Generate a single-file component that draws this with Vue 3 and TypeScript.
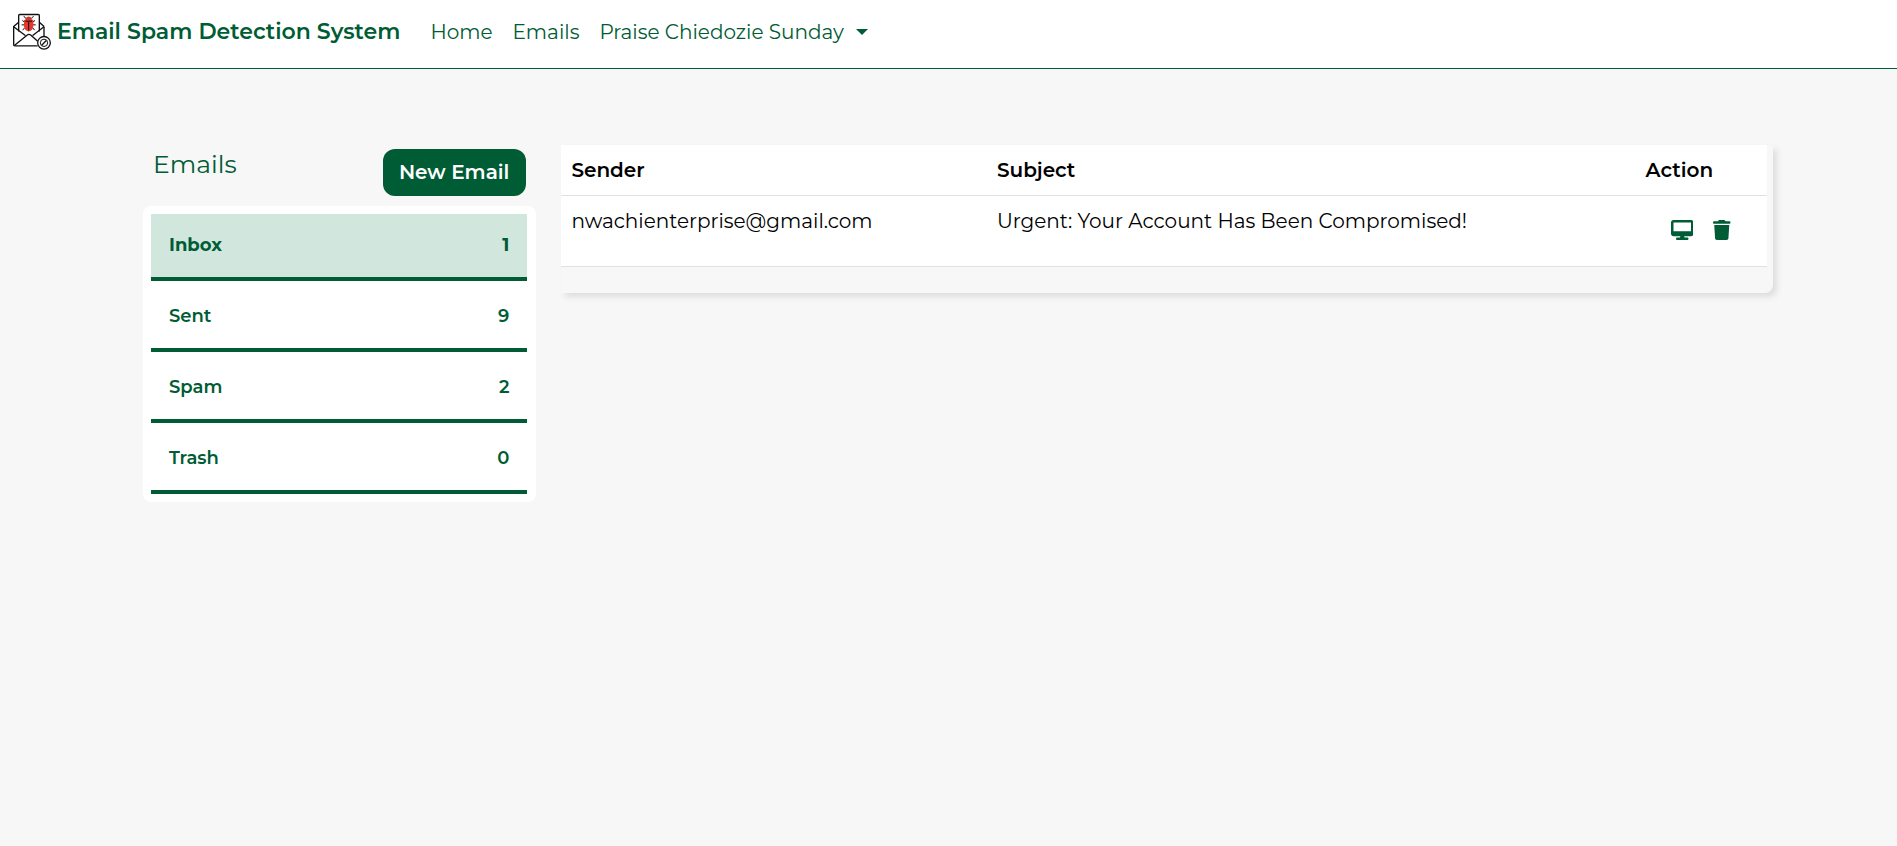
<script setup lang="ts">
import { ref } from 'vue'

interface Folder {
  name: string
  count: number
}

interface Email {
  id: number
  sender: string
  subject: string
}

const folders: Folder[] = [
  { name: 'Inbox', count: 1 },
  { name: 'Sent', count: 9 },
  { name: 'Spam', count: 2 },
  { name: 'Trash', count: 0 },
]

const emails = ref<Email[]>([
  { id: 1, sender: 'nwachienterprise@gmail.com', subject: 'Urgent: Your Account Has Been Compromised!' },
])

const activeFolder = ref('Inbox')
</script>

<template>
  <header class="navbar">
    <a class="brand" href="#">
      <svg class="logo" viewBox="0 0 114 111" fill="none" stroke="#111" stroke-width="4" stroke-linejoin="round" aria-hidden="true">
        <path d="M17 26 2 39v55q0 3 3 3h69M93 39v31M79 26l14 13" />
        <path d="M17 54V6q0-3 3-3h56q3 0 3 3v48" />
        <path d="M2 40 37 66M93 40 59 66M4 96 42 65q6-5 12 0l20 18" />
        <path d="M38 15q-1-5-6-6M56 15q1-5 6-6M35 26l-7-5M59 26l7-5M34 34h-8M60 34h8M35 43l-6 7M59 43l6 7" stroke-width="3" />
        <path d="M33 20q14-8 28 0v16q0 15-14 18-14-3-14-18z" fill="#e33a2f" stroke="none" />
        <path d="M37 17q2-8 10-8t10 8q-10 4-20 0z" fill="#d9352c" stroke="none" />
        <path d="M37 23h20M47 24v27" stroke-width="3" />
        <circle cx="93" cy="88" r="19" fill="#fff" stroke-width="4" />
        <circle cx="93" cy="88" r="11" stroke-width="3" />
        <path d="m86 95 14-14" stroke-width="4" />
      </svg>
      <span>Email Spam Detection System</span>
    </a>
    <nav class="links" aria-label="Main">
      <a href="#">Home</a>
      <a href="#">Emails</a>
      <button type="button" class="user" aria-haspopup="true">Praise Chiedozie Sunday<span class="caret"></span></button>
    </nav>
  </header>

  <main class="layout">
    <aside class="sidebar">
      <div class="sidebar-head">
        <h1>Emails</h1>
        <button type="button" class="compose">New Email</button>
      </div>
      <nav class="folders" aria-label="Folders">
        <a
          v-for="folder in folders"
          :key="folder.name"
          href="#"
          class="folder"
          :class="{ active: folder.name === activeFolder }"
          @click.prevent="activeFolder = folder.name"
        >
          <span>{{ folder.name }}</span>
          <span>{{ folder.count }}</span>
        </a>
      </nav>
    </aside>

    <section class="panel">
      <table>
        <thead>
          <tr>
            <th class="col-sender" scope="col">Sender</th>
            <th class="col-subject" scope="col">Subject</th>
            <th scope="col">Action</th>
          </tr>
        </thead>
        <tbody>
          <tr v-for="email in emails" :key="email.id">
            <td>{{ email.sender }}</td>
            <td>{{ email.subject }}</td>
            <td>
              <div class="actions">
                <button type="button" aria-label="View email">
                  <svg viewBox="0 0 576 512" aria-hidden="true">
                    <path d="M64 0C28.700 0 0 28.700 0 64v288c0 35.300 28.700 64 64 64h176l-10.700 32H160c-17.700 0-32 14.300-32 32s14.300 32 32 32h256c17.700 0 32-14.300 32-32s-14.300-32-32-32h-69.300L336 416h176c35.300 0 64-28.700 64-64V64c0-35.300-28.700-64-64-64H64zm448 64v224H64V64h448z" />
                  </svg>
                </button>
                <button type="button" aria-label="Delete email">
                  <svg viewBox="0 0 448 512" aria-hidden="true">
                    <path d="M135.200 17.700 128 32H32C14.300 32 0 46.300 0 64s14.300 32 32 32h384c17.700 0 32-14.300 32-32s-14.300-32-32-32h-96l-7.200-14.300C307.400 6.800 296.300 0 284.200 0H163.800c-12.100 0-23.200 6.800-28.600 17.700zM416 128H32l21.200 339c1.600 25.300 22.600 45 47.900 45h245.800c25.300 0 46.300-19.700 47.900-45L416 128z" />
                  </svg>
                </button>
              </div>
            </td>
          </tr>
        </tbody>
      </table>
    </section>
  </main>
</template>

<style>
body {
  margin: 0;
  background: #f7f7f7;
}
</style>

<style scoped>
.navbar,
.layout {
  font-family: Montserrat, Inter, "Liberation Sans", sans-serif;
  font-size: 20px;
  line-height: 30px;
}

.navbar {
  display: flex;
  align-items: center;
  gap: 30px;
  padding: 13px 13px 17px;
  background: #fff;
  border-bottom: 1px solid #005c34;
}

a,
button {
  color: #005c34;
  font: inherit;
  text-decoration: none;
}

button {
  margin: 0;
  padding: 0;
  border: 0;
  background: none;
  cursor: pointer;
}

.brand {
  display: flex;
  align-items: center;
  gap: 6px;
  font-size: 22px;
  font-weight: 600;
  white-space: nowrap;
}

.logo {
  width: 38px;
  height: 38px;
}

.links {
  display: flex;
  align-items: center;
  gap: 20px;
  white-space: nowrap;
}

.user {
  display: flex;
  align-items: center;
  gap: 12px;
}

.caret {
  border: 6px solid transparent;
  border-top-color: #005c34;
  border-bottom: 0;
}

.layout {
  display: grid;
  grid-template-columns: 25fr 77fr;
  gap: 25px;
  align-items: start;
  padding: 76px 124px 40px 143px;
}

.sidebar-head {
  display: flex;
  justify-content: space-between;
  padding: 4px 10px 10px;
}

h1 {
  margin: 0;
  color: #005c34;
  font-size: 25px;
  font-weight: 400;
}

.compose {
  padding: 8px 17px 9px 16px;
  border-radius: 12px;
  background: #005c34;
  color: #fff;
  font-weight: 600;
}

.folders {
  display: grid;
  gap: 4px;
  padding: 8px 9px 8px 8px;
  border-radius: 8px;
  background: #fff;
}

.folder {
  display: flex;
  align-items: center;
  justify-content: space-between;
  padding: 16px 18px 17px;
  border-bottom: 4px solid #005c34;
  font-size: 18px;
  font-weight: 600;
}

.folder.active {
  background: #d1e7dd;
  font-weight: 700;
}

.panel {
  padding: 0 6px 26px 0;
  border-radius: 0 0 8px 0;
  box-shadow: 4px 4px 6px rgba(0, 0, 0, 0.1);
}

table {
  width: 100%;
  border-collapse: collapse;
  table-layout: fixed;
  background: #fff;
  color: #000;
}

th,
td {
  box-sizing: border-box;
  padding: 10px;
  border-bottom: 1px solid #dee2e6;
  text-align: left;
  vertical-align: top;
}

th {
  font-weight: 600;
}

.col-sender {
  width: 35.3%;
}

.col-subject {
  width: 53.8%;
}

.actions {
  display: flex;
  gap: 20px;
  padding: 14px 0 16px 25px;
}

.actions button {
  display: flex;
}

.actions svg {
  height: 20px;
  fill: #005c34;
}
</style>
